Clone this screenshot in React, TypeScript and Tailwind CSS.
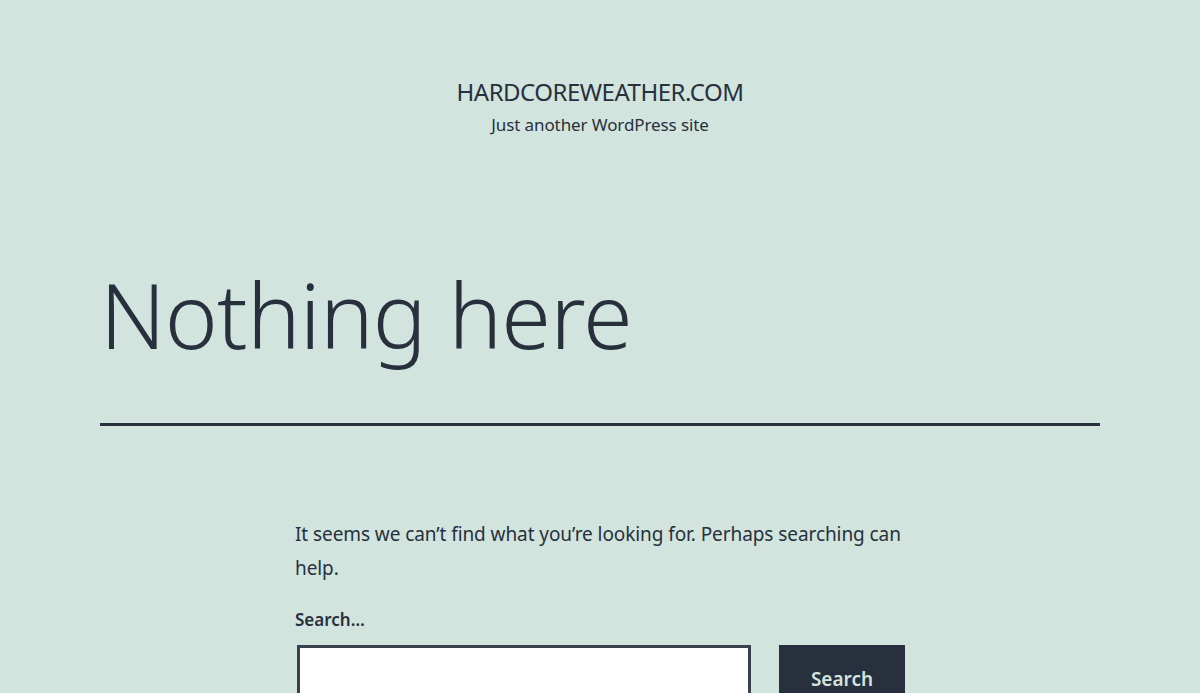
export default function App() {
  return (
    <div
      className="h-[693px] w-full bg-[#d1e4dd] text-[#28303d] overflow-hidden"
      style={{ fontFamily: '"Noto Sans", "Open Sans", sans-serif' }}
    >
      <header className="flex flex-col items-center pt-[77px]">
        <p className="text-[24px] leading-[30px] uppercase tracking-[-0.5px]">hardcoreweather.com</p>
        <p className="mt-[6px] text-[17px] leading-[24px] tracking-[-0.1px]">Just another WordPress site</p>
      </header>

      <div className="mx-[100px] mt-[127px]">
        <h1 className="text-[90px] leading-[100px] font-light tracking-[-0.8px]">Nothing here</h1>
        <div className="mt-[59px] h-[3px] bg-[#28303d]" />
      </div>

      <div className="mx-auto mt-[91px] w-[610px]">
        <p className="text-[19px] leading-[34px] tracking-[-0.08px]">
          It seems we can’t find what you’re looking for. Perhaps searching can help.
        </p>
        <label className="block mt-[23px] text-[17px] leading-[24px] font-semibold">Search…</label>
        <div className="mt-[13px] flex items-start">
          <div className="ml-[2px] w-[454px] h-[70px] border-[3px] border-[#39414d] bg-white" />
          <button className="ml-[28px] w-[126px] h-[70px] bg-[#28303d] text-[#d1e4dd] text-[19px] font-semibold pt-[8px] self-start">
            <span className="block -mt-[10px]">Search</span>
          </button>
        </div>
      </div>
    </div>
  );
}
